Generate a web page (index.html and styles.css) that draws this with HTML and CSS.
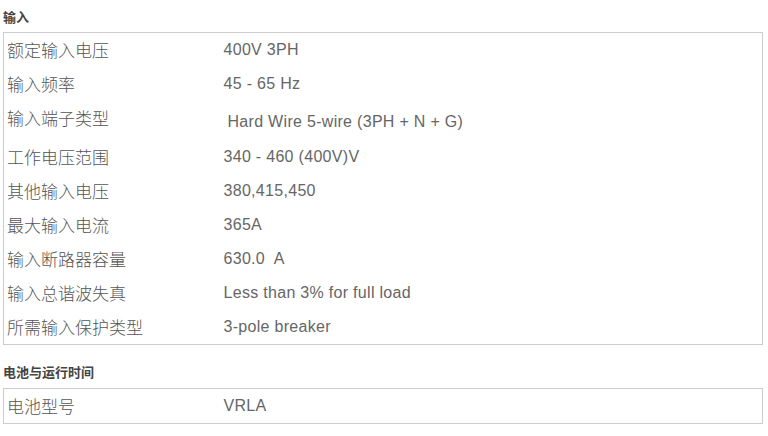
FILE: index.html
```html
<!DOCTYPE html>
<html>
<head>
<meta charset="utf-8">
<link rel="stylesheet" href="styles.css">
</head>
<body>
<div class="page">
  <h3 class="sec-title first">输入</h3>
  <table class="spec">
    <colgroup><col class="c-label"><col class="c-value"></colgroup>
    <tr><td class="label">额定输入电压</td><td class="value">400V 3PH</td></tr>
    <tr><td class="label">输入频率</td><td class="value">45 - 65 Hz</td></tr>
    <tr><td class="label">输入端子类型</td><td class="value tall"><span class="indent">Hard Wire 5-wire (3PH + N + G)</span></td></tr>
    <tr><td class="label">工作电压范围</td><td class="value">340 - 460 (400V)V</td></tr>
    <tr><td class="label">其他输入电压</td><td class="value">380,415,450</td></tr>
    <tr><td class="label">最大输入电流</td><td class="value">365A</td></tr>
    <tr><td class="label">输入断路器容量</td><td class="value">630.0&nbsp; A</td></tr>
    <tr><td class="label">输入总谐波失真</td><td class="value">Less than 3% for full load</td></tr>
    <tr><td class="label">所需输入保护类型</td><td class="value">3-pole breaker</td></tr>
  </table>
  <h3 class="sec-title">电池与运行时间</h3>
  <table class="spec">
    <colgroup><col class="c-label"><col class="c-value"></colgroup>
    <tr><td class="label">电池型号</td><td class="value">VRLA</td></tr>
  </table>
</div>
</body>
</html>
```
FILE: styles.css
```css
html, body {
  margin: 0;
  padding: 0;
  background: #ffffff;
}
.page {
  padding-left: 3px;
  font-family: "Liberation Sans", "Noto Sans CJK SC", sans-serif;
}
.sec-title {
  margin: 0;
  padding-top: 20px;
  margin-bottom: 9px;
  font-size: 13px;
  line-height: 14px;
  font-weight: bold;
  color: #444;
  font-family: "Noto Sans CJK SC", sans-serif;
}
.sec-title.first {
  padding-top: 10px;
  margin-bottom: 8px;
}
.spec {
  width: 760px;
  border: 1px solid #cccccc;
  border-collapse: collapse;
  table-layout: fixed;
}
.c-label { width: 217px; }
.spec td {
  padding: 0;
  vertical-align: top;
  height: 34px;
  line-height: 34px;
  font-size: 16px;
}
.label {
  padding-left: 3px !important;
  color: #555;
  font-size: 17px !important;
  font-family: "Noto Sans CJK SC", sans-serif;
  font-weight: 300;
}
.value {
  padding-left: 3px !important;
  color: #666;
  letter-spacing: 0.3px;
  font-family: "Liberation Sans", sans-serif;
}
.value.tall {
  padding-top: 4px !important;
  padding-bottom: 1px !important;
}
.indent {
  padding-left: 4px;
}
```
